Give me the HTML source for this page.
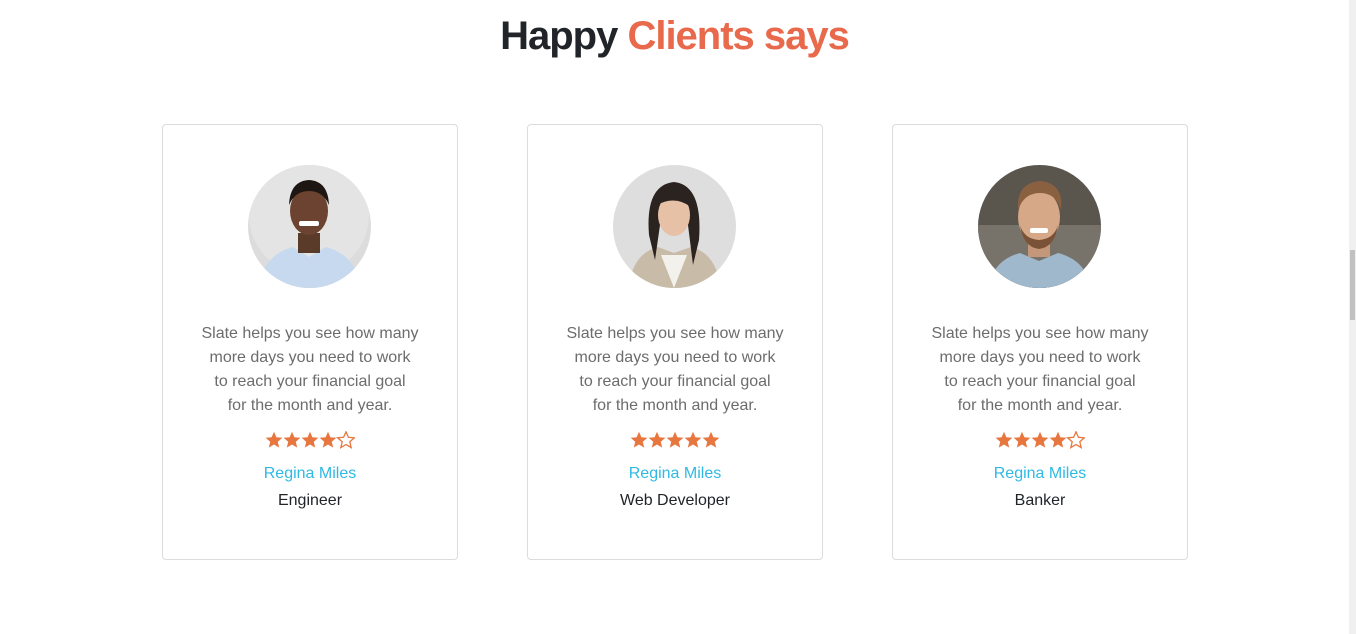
<!DOCTYPE html>
<html><head><meta charset="utf-8"><style>
html,body{margin:0;padding:0;background:#fff;width:1356px;height:634px;overflow:hidden;font-family:"Segoe UI","Liberation Sans",sans-serif}
h2{position:absolute;top:14px;left:0;width:1349px;text-align:center;margin:0;font-size:40px;font-weight:bold;color:#212529;letter-spacing:-1px}
h2 span{color:#e8694b}
.card{position:absolute;top:124px;width:294px;height:434px;border:1px solid #dcdcdc;border-radius:4px;text-align:center}
.av{position:absolute;left:85px;top:40px;width:123px;height:123px;border-radius:50%;overflow:hidden}
.txt{position:absolute;top:197px;left:0;width:100%;font-size:16px;line-height:24px;color:#6c6c6c}
.stars{position:absolute;top:306px;left:102px;width:90px;height:18px}
.name{position:absolute;top:340px;width:100%;font-size:16px;color:#2fb9e3}
.role{position:absolute;top:367px;width:100%;font-size:16px;color:#212529;font-weight:500}
.sb{position:absolute;right:0;top:0;width:7px;height:634px;background:#f0f0f0}
.th{position:absolute;right:1px;top:250px;width:5px;height:70px;background:#c1c1c1}
</style></head><body>
<h2>Happy <span>Clients says</span></h2>
<svg width="0" height="0" style="position:absolute"><defs>
<path id="st" d="M9 0.8 L11.4 6.3 L17.4 6.8 L12.8 10.7 L14.2 16.6 L9 13.5 L3.8 16.6 L5.2 10.7 L0.6 6.8 L6.6 6.3Z"/>
</defs></svg>

<div class="card" style="left:162px">
<div class="av"><svg width="123" height="123"><rect width="123" height="123" fill="#dcdcdc"/><circle cx="61" cy="50" r="60" fill="#e4e4e4"/><path d="M10 123 Q15 90 45 82 L61 92 L78 82 Q108 90 113 123Z" fill="#c6d9ee"/><rect x="50" y="68" width="22" height="20" fill="#5a3a28"/><ellipse cx="61" cy="46" rx="19" ry="24" fill="#6b4330"/><path d="M41 40 Q42 16 61 15 Q80 16 81 40 Q75 26 61 26 Q47 26 41 40Z" fill="#1e1612"/><rect x="51" y="56" width="20" height="5" rx="2" fill="#fff"/></svg></div>
<div class="txt">Slate helps you see how many<br>more days you need to work<br>to reach your financial goal<br>for the month and year.</div>
<svg class="stars" viewBox="0 0 90 18"><g fill="#e8773f"><use href="#st"/><use href="#st" x="18"/><use href="#st" x="36"/><use href="#st" x="54"/></g><use href="#st" x="72" fill="none" stroke="#e8773f" stroke-width="1.3"/></svg>
<div class="name">Regina Miles</div>
<div class="role">Engineer</div>
</div>

<div class="card" style="left:527px">
<div class="av"><svg width="123" height="123"><rect width="123" height="123" fill="#dedede"/><path d="M15 123 Q20 88 45 82 L61 88 L78 82 Q103 88 108 123Z" fill="#c8bca8"/><path d="M48 90 L61 123 L74 90Z" fill="#f3f1ec"/><path d="M36 70 Q32 20 61 17 Q90 20 86 75 L80 100 L75 60 L47 60 L42 95Z" fill="#2a2320"/><ellipse cx="61" cy="50" rx="16" ry="21" fill="#e6c1a6"/><path d="M44 40 Q50 22 70 28 Q78 32 78 42 Q62 30 44 40Z" fill="#2a2320"/></svg></div>
<div class="txt">Slate helps you see how many<br>more days you need to work<br>to reach your financial goal<br>for the month and year.</div>
<svg class="stars" viewBox="0 0 90 18"><g fill="#e8773f"><use href="#st"/><use href="#st" x="18"/><use href="#st" x="36"/><use href="#st" x="54"/><use href="#st" x="72"/></g></svg>
<div class="name">Regina Miles</div>
<div class="role">Web Developer</div>
</div>

<div class="card" style="left:892px">
<div class="av"><svg width="123" height="123"><rect width="123" height="123" fill="#5a554d"/><rect x="0" y="60" width="123" height="63" fill="#77736a"/><path d="M10 123 Q15 95 42 88 L61 96 L80 88 Q108 95 113 123Z" fill="#9fb8cc"/><rect x="50" y="72" width="22" height="20" fill="#c4977a"/><ellipse cx="61" cy="52" rx="21" ry="27" fill="#d6a888"/><path d="M40 45 Q38 18 62 16 Q86 18 83 45 Q78 28 62 28 Q46 28 40 45Z" fill="#8a6140"/><path d="M42 60 Q45 82 61 84 Q77 82 80 60 Q76 74 61 75 Q46 74 42 60Z" fill="#7a5238"/><rect x="52" y="63" width="18" height="5" rx="2" fill="#fff"/></svg></div>
<div class="txt">Slate helps you see how many<br>more days you need to work<br>to reach your financial goal<br>for the month and year.</div>
<svg class="stars" viewBox="0 0 90 18"><g fill="#e8773f"><use href="#st"/><use href="#st" x="18"/><use href="#st" x="36"/><use href="#st" x="54"/></g><use href="#st" x="72" fill="none" stroke="#e8773f" stroke-width="1.3"/></svg>
<div class="name">Regina Miles</div>
<div class="role">Banker</div>
</div>

<div class="sb"><div class="th"></div></div>
</body></html>
